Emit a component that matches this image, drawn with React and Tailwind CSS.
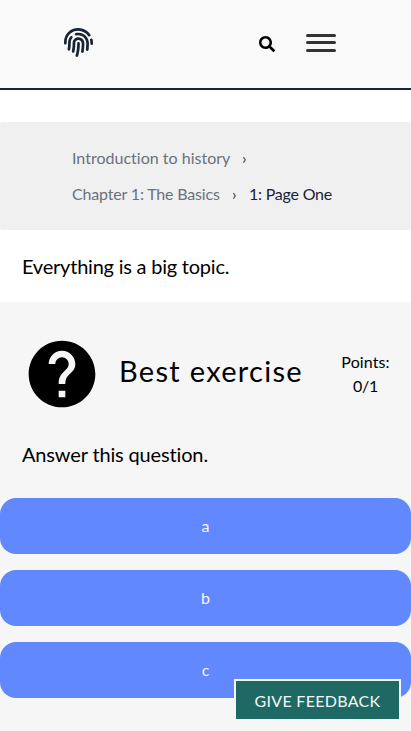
import { FaFingerprint, FaSearch } from "react-icons/fa";

function Header() {
  return (
    <header className="flex h-[90px] items-start justify-between border-b-2 border-[#1a2333] bg-[#f9f9f9] pr-[75px] pl-[64px]">
      <FaFingerprint className="mt-[28px] size-[29px] text-[#1a2333]" />
      <div className="flex items-start">
        <FaSearch className="mt-9 size-4 text-black" />
        <button aria-label="Open menu" className="mt-[34px] ml-[31px] flex w-[30px] flex-col">
          <span className="h-[3px] w-full rounded-sm bg-[#333]" />
          <span className="mt-1 h-[3px] w-full rounded-sm bg-[#333]" />
          <span className="mt-[5px] h-[3px] w-full rounded-sm bg-[#333]" />
        </button>
      </div>
    </header>
  );
}

function Breadcrumbs() {
  return (
    <nav className="mt-8 h-[108px] rounded-[2px] bg-[#f0f0f0] pt-[18px] pl-[72px] text-base leading-9 text-[#6b707b]">
      <div className="flex">
        <span className="w-[158px] whitespace-nowrap tracking-[0.01px]">Introduction to history</span>
        <span className="ml-3 text-[#333]">›</span>
      </div>
      <div className="flex">
        <span className="w-[148px] tracking-[-0.17px] whitespace-nowrap">Chapter 1: The Basics</span>
        <span className="ml-3 w-[5px] text-[#333]">›</span>
        <span className="ml-3 tracking-[-0.22px] text-[#1a2333]">1: Page One</span>
      </div>
    </nav>
  );
}

function Exercise() {
  return (
    <section className="h-[429px] bg-[#f6f6f6] pt-8">
      <div className="flex h-20 items-center pl-[22px]">
        <svg viewBox="0 0 24 24" className="size-20 shrink-0" fill="currentColor">
          <path d="M12 2C6.48 2 2 6.48 2 12s4.48 10 10 10 10-4.48 10-10S17.52 2 12 2zm1 17h-2v-2h2v2zm2.07-7.75-.9.92C13.45 12.9 13 13.5 13 15h-2v-.5c0-1.1.45-2.1 1.17-2.83l1.24-1.26c.37-.36.59-.86.59-1.41 0-1.1-.9-2-2-2s-2 .9-2 2H8c0-2.21 1.79-4 4-4s4 1.79 4 4c0 .88-.36 1.68-.93 2.25z" />
        </svg>
        <h2 className="mb-[6px] ml-[17px] w-[200px] text-[29px] leading-9 tracking-[1.3px] whitespace-nowrap">
          Best exercise
        </h2>
        <div className="ml-4 w-[61px] text-center text-base leading-6">
          <span className="tracking-[0.1px]">Points:</span>
          <br />
          <span className="tracking-[-0.2px]">0/1</span>
        </div>
      </div>
      <p className="mt-[23px] pl-[22px] text-xl leading-[34px] tracking-[-0.15px]">Answer this question.</p>
      <div className="mt-[27px] flex flex-col gap-4">
        {["a", "b", "c"].map((option) => (
          <button key={option} className="h-14 w-full rounded-2xl bg-[#6188ff] text-base text-[#f5f6f7]">
            {option}
          </button>
        ))}
      </div>
    </section>
  );
}

export default function App() {
  return (
    <div className="relative h-[731px] w-full overflow-hidden bg-white font-['Lato',sans-serif] text-black">
      <Header />
      <Breadcrumbs />
      <p className="h-[72px] pt-[19px] pl-[22px] text-xl leading-[34px] tracking-[-0.22px]">Everything is a big topic.</p>
      <Exercise />
      <button className="absolute right-[10px] bottom-[10px] h-[42px] w-[167px] border-2 border-[#f5f6f7] bg-[#1f6964] pt-0.5 text-base tracking-[0.3px] whitespace-nowrap text-[#f5f6f7]">
        GIVE FEEDBACK
      </button>
    </div>
  );
}
